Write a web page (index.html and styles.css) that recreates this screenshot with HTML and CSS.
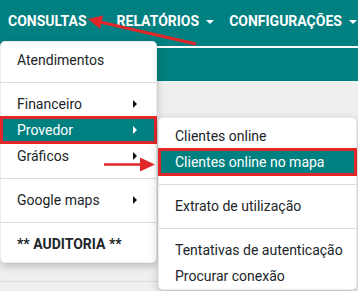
FILE: index.html
```html
<!DOCTYPE html>
<html>
<head>
	<title>Consultas - Provedor</title>
	<link rel="stylesheet" href="styles.css">
</head>
<body>
	<div class="topbar">
		<nav class="nav">
			<a class="nav-link">CONSULTAS<span class="caret"></span></a>
			<a class="nav-link">RELATÓRIOS<span class="caret"></span></a>
			<a class="nav-link">CONFIGURAÇÕES<span class="caret"></span></a>
		</nav>
	</div>
	<div class="subbar"></div>
	<div class="page">
		<div class="page-row"></div>
	</div>

	<div class="dropdown-menu main-menu">
		<div class="item">Atendimentos</div>
		<div class="divider"></div>
		<div class="item has-sub">Financeiro<span class="sub-arrow"></span></div>
		<div class="item has-sub active marked">Provedor<span class="sub-arrow"></span></div>
		<div class="item has-sub">Gráficos<span class="sub-arrow"></span></div>
		<div class="divider"></div>
		<div class="item has-sub">Google maps<span class="sub-arrow"></span></div>
		<div class="divider"></div>
		<div class="item bold">** AUDITORIA **</div>
	</div>

	<div class="dropdown-menu sub-menu">
		<div class="item">Clientes online</div>
		<div class="item active marked">Clientes online no mapa</div>
		<div class="divider"></div>
		<div class="item">Extrato de utilização</div>
		<div class="divider"></div>
		<div class="item">Tentativas de autenticação</div>
		<div class="item">Procurar conexão</div>
	</div>

	<svg class="arrows" width="358" height="291" viewBox="0 0 358 291">
		<line x1="196" y1="44" x2="100" y2="22" stroke="#e0282a" stroke-width="3"/>
		<polygon points="88,19 103.2,15.4 100,29" fill="#e0282a"/>
		<line x1="104" y1="164.5" x2="142" y2="164.5" stroke="#e0282a" stroke-width="2.5"/>
		<polygon points="155,164.5 140,157.5 140,171.5" fill="#e0282a"/>
	</svg>
</body>
</html>
```

FILE: styles.css
```css
html {
	overflow: hidden;
}

body {
	margin: 0;
	height: 291px;
	background-color: #efefef;
	font-family: 'Roboto', 'Liberation Sans', sans-serif;
	font-size: 14px;
	color: #212529;
	overflow: hidden;
}

.topbar {
	background-color: #008080;
	height: 46px;
	border-bottom: 2px solid #ffffff;
}

.nav {
	display: flex;
	padding: 11px 0 0 8px;
	gap: 15px;
}

.nav-link {
	display: flex;
	align-items: center;
	color: #ffffff;
	font-weight: bold;
	line-height: 21px;
	white-space: nowrap;
}

.caret {
	display: inline-block;
	margin-left: 7px;
	border-top: 4.5px solid #ffffff;
	border-left: 4px solid transparent;
	border-right: 4px solid transparent;
}

.subbar {
	background-color: #008080;
	height: 33px;
}

.page {
	padding-top: 200px;
}

.page-row {
	border-bottom: 1px solid #dcdcdc;
}

.dropdown-menu {
	position: absolute;
	background-color: #ffffff;
	border: 1px solid rgba(0, 0, 0, 0.08);
	border-radius: 5px;
	box-shadow: 0 3px 8px rgba(0, 0, 0, 0.22);
	padding: 5px 0;
}

.main-menu {
	left: 0;
	top: 41px;
	width: 155px;
}

.sub-menu {
	left: 158px;
	top: 117px;
	width: 197px;
	padding-bottom: 0;
}

.item {
	position: relative;
	line-height: 22px;
	padding: 2px 16px;
	white-space: nowrap;
}

.item.bold {
	font-weight: bold;
}

.item.active {
	background-color: #008080;
	color: #ffffff;
}

.item.marked {
	outline: 3px solid #e0282a;
	outline-offset: -2px;
}

.sub-arrow {
	position: absolute;
	right: 19px;
	top: 9px;
	border-left: 4px solid #111111;
	border-top: 4px solid transparent;
	border-bottom: 4px solid transparent;
}

.item.active .sub-arrow {
	border-left-color: #ffffff;
}

.divider {
	margin: 9px 0 8px;
	border-top: 1px solid #dcdcdc;
}

.arrows {
	position: absolute;
	left: 0;
	top: 0;
	pointer-events: none;
}
```
